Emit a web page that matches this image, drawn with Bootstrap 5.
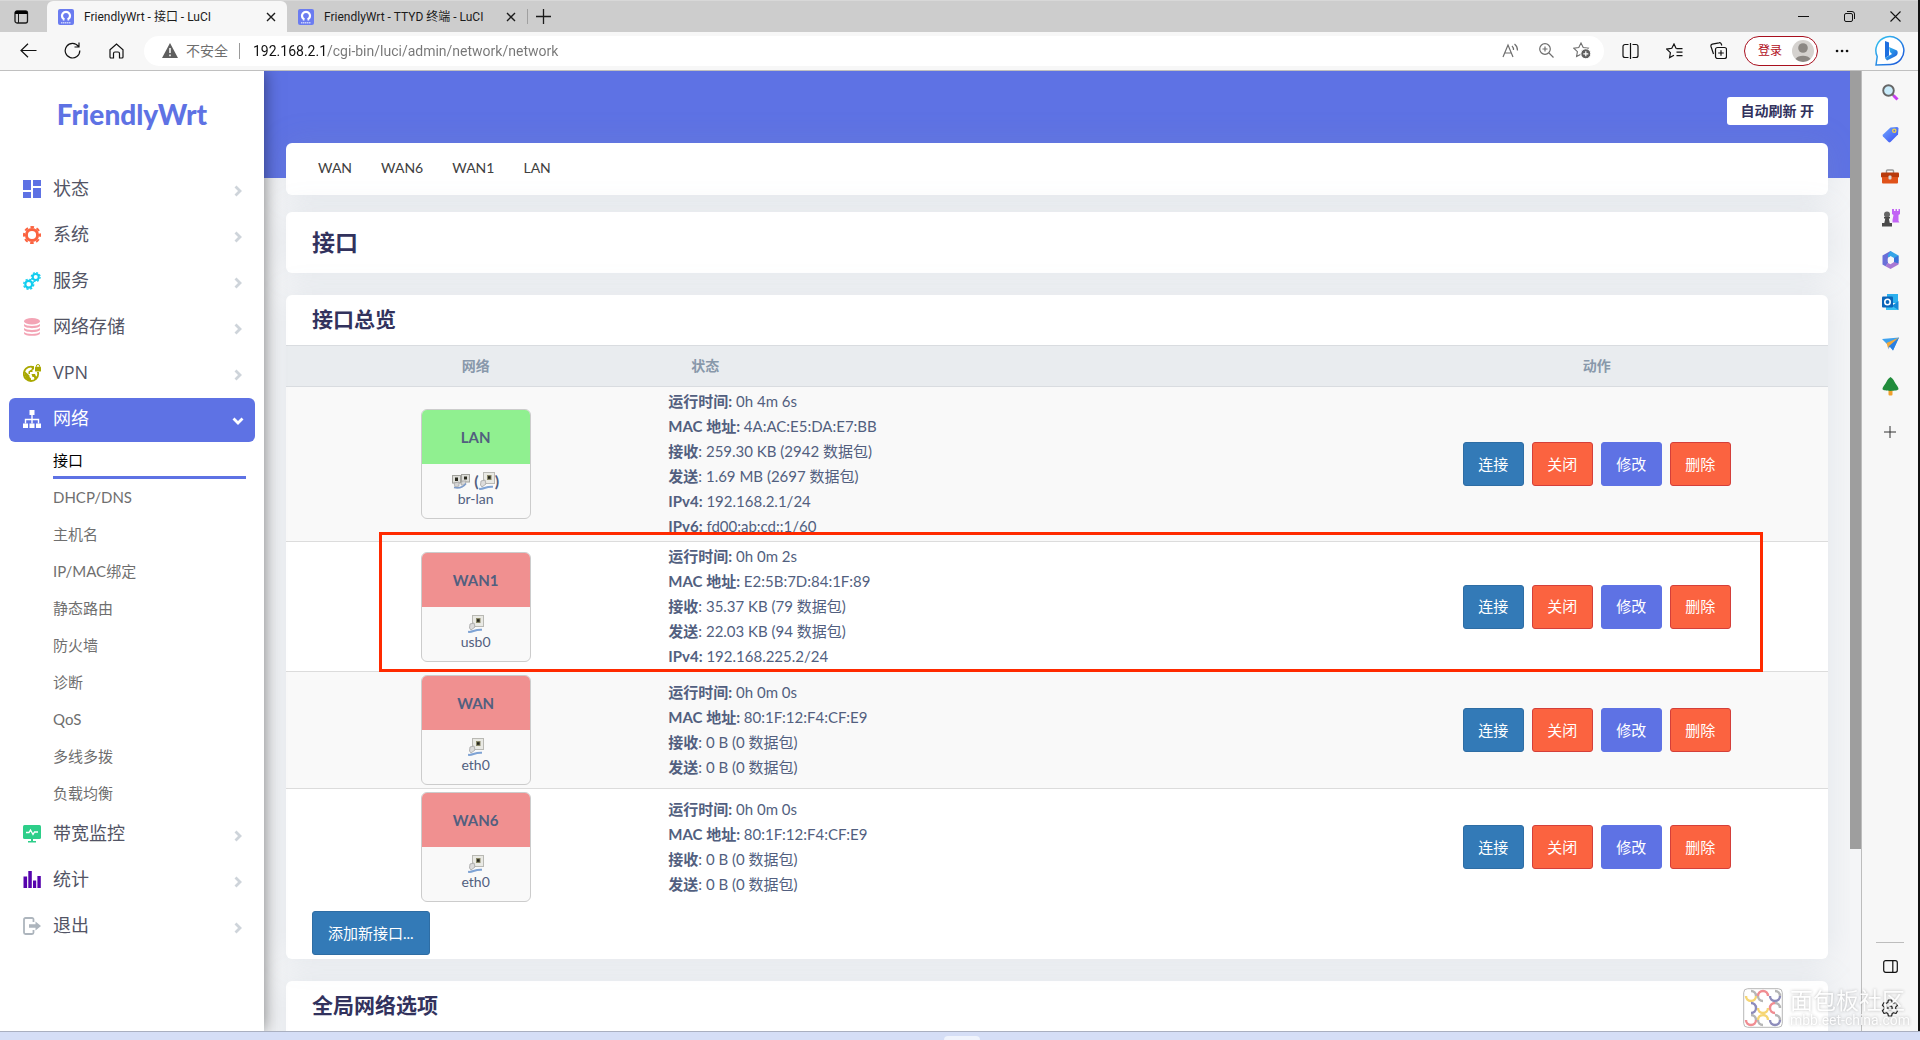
<!DOCTYPE html>
<html lang="zh-CN">
<head>
<meta charset="utf-8">
<meta name="viewport" content="width=device-width, initial-scale=1">
<title>FriendlyWrt - 接口 - LuCI</title>
<link rel="stylesheet" href="https://cdn.jsdelivr.net/npm/bootstrap@5.3.0/dist/css/bootstrap.min.css">
<style>
:root { --brand: #5e72e4; --ui: Roboto, "Noto Sans CJK SC", sans-serif; --page: Lato, "Noto Sans CJK SC", sans-serif; }
body { font-family: var(--page); font-size: 15px; line-height: 25px; color: #525f7f; background: #f7f7f7; }
svg { display: block; flex: none; }
a { color: inherit; text-decoration: none; }

/* browser chrome */
.chrome { font-family: var(--ui); font-size: 13px; line-height: 20px; color: #1b1b1b; border-right: 2px solid #111; }
.tabstrip { height: 32px; background: #cdcdcd; border-top: 1px solid #d8d8d8; }
.tool { border: 0; background: none; padding: 0; color: #1b1b1b; display: flex; align-items: center; justify-content: center; }
.w-tool { width: 44px; }
.w-side { width: 56px; }
.w-win { width: 46px; }
.w-actions { width: 47px; }
.browser-tab { width: 240px; padding: 0 7px 0 11px; gap: 10px; font-size: 12px; }
.browser-tab.current { background: #f7f7f7; border-radius: 6px 6px 0 0; }
.addressbar { height: 39px; border-bottom: 1px solid #c0c0c0; background: #f7f7f7; padding-bottom: 1px; }
.nav-tools { width: 144px; padding-left: 6px; }
.pill { height: 30px; border-radius: 15px; background: #fff; padding: 0 4px 0 18px; color: #6e6e6e; font-size: 14px; }
.pill .tool { color: #6e6e6e; width: 36px; }
.pill-rule { width: 1px; height: 16px; background: #9a9a9a; margin: 0 13px 0 11px; }
.url-box { border: 0; outline: 0; padding: 0; color: transparent; background: linear-gradient(90deg, #111 73px, #767676 73px); -webkit-background-clip: text; background-clip: text; }
.login { width: 74px; height: 30px; border: 1px solid #a80f1e; border-radius: 15px; background: #fff; color: #b10e1c; padding: 0 3px 0 13px; font-size: 12px; }
.edge-rail { width: 58px; background: #f7f7f7; border-right: 2px solid #111; padding-bottom: 2px; }
.edge-rail .tool { width: 56px; height: 42px; }
.rail-rule { width: 28px; height: 1px; background: #bdbdbd; margin: 0 14px 2px; }
.taskbar { height: 9px; background: #d5def6; border-top: 1px solid #a9afc0; }
.taskbar span { width: 36px; height: 4px; margin-left: 944px; background: #eff3fc; border-radius: 4px 4px 0 0; }

/* router page */
.menu-side { width: 264px; background: #fff; box-shadow: 0 0 16px rgba(0,0,0,.5); z-index: 2; padding: 0 9px; }
.logo-text { font-size: 28px; line-height: 34px; font-weight: 900; color: var(--brand); padding: 26px 0 37px; }
.menu-link { height: 44px; margin-bottom: 2px; padding: 0 13px 3px 14px; border-radius: 6px; font-family: "Open Sans", "Noto Sans CJK SC", sans-serif; font-size: 18px; color: #525465; gap: 12px; }
.menu-link .arrow { margin: 4px 0 0 auto; color: #ced4da; }
.menu-link.active { background: var(--brand); color: #fff; margin-bottom: 0; }
.menu-link.active .arrow { color: #fff; margin-right: -2px; }
.menu-sub { padding-bottom: 1px; }
.sub-link { display: block; height: 37px; line-height: 36px; margin: 0 9px 0 44px; color: #6f6f6f; }
.sub-link.active { color: #000; border-bottom: 3px solid var(--brand); }
.content-side { background: linear-gradient(#5e72e4 107px, #f4f5f7 107px); padding: 26px 22px 0; }
.scroll-track { width: 12px; background: #f4f5f7; border-right: 1px solid #bdbdbd; }
.scroll-track div { height: 81%; background: #9e9e9e; }
.refresh { height: 28px; border: 0; border-radius: 3px; background: #fff; color: #32325d; font-size: 14px; line-height: 28px; font-weight: 700; padding: 0 14px; }
.panel { background: #fff; border-radius: 6px; box-shadow: 0 0 32px rgba(136,152,170,.17); margin-bottom: 22px; }
.panel-tabs { height: 52px; margin: 18px 0 17px; padding: 0 32px 3px; gap: 29px; font-size: 14px; color: #404040; }
.panel h2, .panel h3 { margin: 0; padding: 0 26px; font-weight: 700; color: #32325d; }
.panel h2 { font-size: 23px; line-height: 61px; }
.panel h3 { font-size: 21px; line-height: 47px; padding-bottom: 3px; }
.iface { border-collapse: separate; border-spacing: 0; table-layout: fixed; width: 100%; }
.iface td { border-bottom: 1px solid #dcdcdc; padding: 2px 3px; vertical-align: middle; }
.iface td.net { padding: 3px; }
.iface tr:last-child td { border-bottom: 0; }
.iface tbody tr:nth-child(odd) { background: #f9f9f9; }
.iface th { height: 42px; background: #e9ecef; border: 0 solid #d9dce0; border-width: 1px 0; font-size: 14px; line-height: 20px; color: #8898aa; padding: 0 26px; }
.net-box { width: 110px; height: 110px; border: 1px solid #ccc; border-radius: 6px; background: #f9f9f9; overflow: hidden; font-size: 14px; line-height: 18px; }
.net-name { height: 54px; line-height: 54px; font-size: 15px; font-weight: 700; background: #f09090; }
.net-name.up { background: #90f090; }
.net-ico { height: 18px; margin-top: 8px; font-size: 16px; }
.act { height: 44px; padding: 0 15px; border: 1px solid; border-radius: 3px; color: #fff; font-size: 15px; white-space: nowrap; }
td .act { width: 61px; padding: 0; }
.act-blue { background: #337ab7; border-color: #2e6da4; }
.act-red { background: #fb6340; border-color: #d43f3a; }
.act-brand { background: #5e72e4; border-color: #5e72e4; }
.add-row { padding: 6px 26px 4px; }
.highlight-frame { position: absolute; left: 93px; right: 65px; top: 237px; height: 140px; border: 3px solid #ff2a00; pointer-events: none; }
.watermark { position: absolute; right: 10px; bottom: 3px; color: #fff; text-shadow: 0 0 3px rgba(90,90,90,.5); opacity: .85; gap: 7px; }
.watermark .wm-big { font-size: 23px; line-height: 26px; }
.watermark .wm-small { font-size: 14px; line-height: 15px; font-family: Roboto, sans-serif; }
</style>
<script src="https://cdn.jsdelivr.net/npm/bootstrap@5.3.0/dist/js/bootstrap.bundle.min.js"></script>
</head>
<body class="d-flex flex-column vh-100 overflow-hidden">

<svg width="0" height="0" class="position-absolute">
  <defs>
    <linearGradient id="gBlue" x1="0" y1="0" x2="1" y2="1"><stop offset="0" stop-color="#6fa8ff"/><stop offset="1" stop-color="#3a4df0"/></linearGradient>
    <linearGradient id="gBing" x1="0" y1="0" x2="1" y2="1"><stop offset="0" stop-color="#35c8f2"/><stop offset="1" stop-color="#1b50d8"/></linearGradient>
  </defs>
  <symbol id="fav" viewBox="0 0 16 16"><rect width="16" height="16" rx="2" fill="#6b7cf0"/><path d="M6.500 10.500H4.800M9.500 10.500h1.700M6.500 10.500A4 4 0 1 1 9.500 10.500" fill="none" stroke="#fff" stroke-width="2.200"/><path d="M3 13.800h10" stroke="#c9d0fb" stroke-width="1.400" stroke-dasharray="1.500 .5"/></symbol>
  <symbol id="x" viewBox="0 0 10 10"><path d="M1 1l8 8M9 1l-8 8" stroke="#1b1b1b" stroke-width="1.400"/></symbol>
  <symbol id="chev" viewBox="0 0 8 12"><path d="M1.500 1.500L6 6l-4.500 4.500" fill="none" stroke="currentColor" stroke-width="2.800"/></symbol>
  <symbol id="nic" viewBox="0 0 16 18"><rect x="4.500" y=".5" width="11" height="11" fill="#e9e9e4" stroke="#b9b9b4"/><rect x="8" y="3" width="4.500" height="5" fill="#8b8a6a"/><rect x="9" y="4.200" width="2.600" height="2.600" fill="#25251c"/><path d="M2 9l4-1 1 4-4 3-1.500-2z" fill="#dcdcdc" stroke="#a5a5a5" stroke-width=".8"/><path d="M0 16.800c5 .8 6-2.500 14-2" fill="none" stroke="#7fa3d4" stroke-width="2"/></symbol>
  <symbol id="bridge" viewBox="0 0 18 16"><rect x="9.500" y="1.500" width="8" height="7.500" fill="#deded9" stroke="#a2a29d"/><rect x="12" y="3.500" width="3" height="3" fill="#2a2a20"/><rect x=".5" y="2.500" width="8" height="7.500" fill="#deded9" stroke="#a2a29d"/><rect x="3" y="4.500" width="3" height="3.500" fill="#2a2a20"/><path d="M2 10l5-1v4l-4 1zM10 8l4 0-1 4-4 0z" fill="#d5d5d5" stroke="#a0a0a0" stroke-width=".7"/><path d="M2 14.500c5 1 9 0 12-4" fill="none" stroke="#7f9dca" stroke-width="1.600"/></symbol>
</svg>

<header class="chrome">
  <div class="tabstrip d-flex align-items-stretch">
    <button class="tool w-actions pe-2" aria-label="标签操作"><svg class="ms-1" width="15" height="14" viewBox="0 0 15 14"><rect x="1" y="1" width="12.500" height="12" rx="2" fill="none" stroke="#1b1b1b" stroke-width="1.300"/><path d="M1 2.500a1.500 1.500 0 0 1 1.500-1.500h9.500a1.500 1.500 0 0 1 1.500 1.500V4H1z"/><path d="M4.500 4v9" stroke="#1b1b1b"/></svg></button>
    <div class="browser-tab current d-flex align-items-center"><svg width="16" height="16"><use href="#fav"/></svg><span class="me-auto">FriendlyWrt - 接口 - LuCI</span><button class="tool p-1" aria-label="关闭标签"><svg width="10" height="10"><use href="#x"/></svg></button></div>
    <div class="browser-tab d-flex align-items-center"><svg width="16" height="16"><use href="#fav"/></svg><span class="me-auto">FriendlyWrt - TTYD 终端 - LuCI</span><button class="tool p-1" aria-label="关闭标签"><svg width="10" height="10"><use href="#x"/></svg></button></div>
    <div class="vr my-2"></div>
    <button class="tool px-2" aria-label="新建标签"><svg width="15" height="15" viewBox="0 0 15 15"><path d="M7.500 0v15M0 7.500h15" stroke="#1b1b1b" stroke-width="1.300"/></svg></button>
    <button class="tool w-win ms-auto" aria-label="最小化"><svg width="11" height="11"><path d="M0 5.500h11" stroke="#111"/></svg></button>
    <button class="tool w-win" aria-label="还原"><svg width="11" height="11" viewBox="0 0 11 11"><rect x=".5" y="2.500" width="8" height="8" rx="1.500" fill="none" stroke="#111"/><path d="M3 .5h5a2.500 2.500 0 0 1 2.500 2.500v5" fill="none" stroke="#111"/></svg></button>
    <button class="tool w-win" aria-label="关闭窗口"><svg width="11" height="11"><path d="M.5 .5l10 10M10.500 .5l-10 10" stroke="#111" stroke-width="1.100"/></svg></button>
  </div>
  <div class="addressbar d-flex align-items-center">
    <div class="nav-tools d-flex">
      <button class="tool w-tool" aria-label="后退"><svg width="17" height="15" viewBox="0 0 17 15"><path d="M16.500 7.500H1M8 .7L1 7.500l7 6.800" fill="none" stroke="#111" stroke-width="1.200"/></svg></button>
      <button class="tool w-tool" aria-label="刷新"><svg width="17" height="17" viewBox="0 0 17 17"><path d="M14.500 4.500A7.300 7.300 0 1 0 15.800 8.500M15 .5v4.500h-4.500" fill="none" stroke="#111" stroke-width="1.200"/></svg></button>
      <button class="tool w-tool" aria-label="主页"><svg width="15" height="16" viewBox="0 0 15 16"><path d="M1 6.800L7.500 1 14 6.800V14a1 1 0 0 1-1 1h-2.500v-4.500a1.500 1.500 0 0 0-1.500-1.500H6a1.500 1.500 0 0 0-1.500 1.500V15H2a1 1 0 0 1-1-1z" fill="none" stroke="#111" stroke-width="1.200"/></svg></button>
    </div>
    <div class="pill d-flex align-items-center flex-grow-1">
      <svg width="16" height="15" viewBox="0 0 16 15"><path d="M8 0l8 15H0z" fill="#5f5f5f"/><path d="M8 5v5M8 11.500v1.700" stroke="#fff" stroke-width="1.500"/></svg>
      <label for="url" class="ms-2">不安全</label><span class="pill-rule"></span>
      <input id="url" class="url-box flex-grow-1" value="192.168.2.1/cgi-bin/luci/admin/network/network">
      <button class="tool" aria-label="大声朗读"><svg width="17" height="15" viewBox="0 0 17 15"><path d="M1 14L6 2l5 12M2.800 10h6.400M10 3a5 5 0 0 1 1.500 4M12.500 1a8 8 0 0 1 3 6.500" fill="none" stroke="#6e6e6e" stroke-width="1.200"/></svg></button>
      <button class="tool" aria-label="缩放"><svg width="15" height="15" viewBox="0 0 15 15"><path d="M10 10l4.500 4.500M6 3.500v5M3.500 6h5" stroke="#6e6e6e" stroke-width="1.200"/><circle cx="6" cy="6" r="5.300" fill="none" stroke="#6e6e6e" stroke-width="1.200"/></svg></button>
      <button class="tool" aria-label="收藏此页"><svg width="18" height="17" viewBox="0 0 18 17"><path d="M8 1l2.200 4.600 5 .6-3.600 3.500.8 4.800L8 12.200l-4.400 2.300.8-4.900L.8 6.200l5-.6z" fill="none" stroke="#6e6e6e" stroke-width="1.100"/><circle cx="12.800" cy="11.800" r="5" fill="#5f5f5f" stroke="#fff" stroke-width="1"/><path d="M12.800 9.300v5M10.300 11.800h5" stroke="#fff" stroke-width="1.200"/></svg></button>
    </div>
    <button class="tool w-tool ms-1" aria-label="分屏"><svg width="17" height="16" viewBox="0 0 17 16"><path d="M6.500 1.500H3a2 2 0 0 0-2 2v9a2 2 0 0 0 2 2h3.500M10.500 1.500H14a2 2 0 0 1 2 2v9a2 2 0 0 1-2 2h-3.500M8.500 0v16" fill="none" stroke="#111" stroke-width="1.200"/></svg></button>
    <button class="tool w-tool" aria-label="收藏夹"><svg width="17" height="16" viewBox="0 0 17 16"><path d="M11.500 5.500L10 5.300 8 1 5.800 5.300l-5 .8 3.600 3.500-.8 5L8 12.300M10.500 5.700h6M10.500 9.200h6M10.500 12.700h6" fill="none" stroke="#111" stroke-width="1.200"/></svg></button>
    <button class="tool w-tool" aria-label="集锦"><svg width="17" height="17" viewBox="0 0 17 17"><rect x="5.500" y="5.500" width="11" height="11" rx="2" fill="none" stroke="#111" stroke-width="1.200"/><path d="M11 8.200v5.600M8.200 11h5.600M3.500 12L1 4.500a2 2 0 0 1 1.300-2.400L9 .8a2 2 0 0 1 2.300 1.200l.5 1.500" fill="none" stroke="#111" stroke-width="1.200"/></svg></button>
    <button class="login d-flex align-items-center justify-content-between ms-1">登录<svg width="22" height="22" viewBox="0 0 22 22"><circle cx="11" cy="11" r="11" fill="#d5d2cf"/><circle cx="11" cy="8" r="4.800" fill="#8c8884"/><path d="M3.500 19a8.500 6 0 0 1 15 0a11 11 0 0 1-15 0z" fill="#8c8884"/></svg></button>
    <button class="tool w-tool ps-1" aria-label="更多"><svg width="14" height="4"><path d="M2 2h.1M7 2h.1M12 2h.1" stroke="#111" stroke-width="2.600" stroke-linecap="round"/></svg></button>
    <button class="tool w-side" aria-label="Bing"><svg width="31" height="31" viewBox="0 0 31 31"><path d="M1 30l1.200-8.500A14 14 0 1 1 15.500 29.500z" fill="#fff" stroke="url(#gBing)" stroke-width="1.500"/><path d="M10 6l4 1.500v13l-4 2.500z" fill="#1d6fe0"/><path d="M14 12l8 3.500c1.500 2 .5 5-2 6L12 25.500 10 23l7-4-2-2z" fill="url(#gBing)"/></svg></button>
  </div>
</header>

<div class="d-flex flex-grow-1 overflow-hidden position-relative">
  <nav class="menu-side flex-shrink-0">
    <a href="#" class="logo-text d-block text-center">FriendlyWrt</a>
    <a href="#" class="menu-link d-flex align-items-center"><svg width="18" height="18"><path d="M0 0h8v10H0zM10 0h8v6h-8zM0 12h8v6H0zM10 8h8v10h-8z" fill="#5e72e4"/></svg>状态<svg class="arrow" width="8" height="12"><use href="#chev"/></svg></a>
    <a href="#" class="menu-link d-flex align-items-center"><svg width="18" height="18" viewBox="0 0 18 18" fill="none" stroke="#fb6340"><circle cx="9" cy="9" r="5.600" stroke-width="3"/><circle cx="9" cy="9" r="8" stroke-width="2" stroke-dasharray="3.640 2.643" stroke-dashoffset="1.820"/></svg>系统<svg class="arrow" width="8" height="12"><use href="#chev"/></svg></a>
    <a href="#" class="menu-link d-flex align-items-center"><svg width="18" height="18" viewBox="0 0 18 18" fill="none" stroke="#11cdef"><circle cx="5.700" cy="12.300" r="3.400" stroke-width="2.200"/><circle cx="5.700" cy="12.300" r="5" stroke-width="1.400" stroke-dasharray="2.200 1.727"/><circle cx="12.700" cy="5" r="3" stroke-width="2"/><circle cx="12.700" cy="5" r="4.400" stroke-width="1.300" stroke-dasharray="1.900 1.556"/></svg>服务<svg class="arrow" width="8" height="12"><use href="#chev"/></svg></a>
    <a href="#" class="menu-link d-flex align-items-center"><svg width="18" height="18" viewBox="0 0 18 18"><ellipse cx="9" cy="3.200" rx="8" ry="3.200" fill="#f3a4b5"/><path d="M1 6c2 2.600 14 2.600 16 0v1.500c0 3.500-16 3.500-16 0zM1 10c2 2.600 14 2.600 16 0v1.500c0 3.500-16 3.500-16 0zM1 14c2 2.600 14 2.600 16 0v1.200c0 3.500-16 3.500-16 0z" fill="#f3a4b5"/></svg>网络存储<svg class="arrow" width="8" height="12"><use href="#chev"/></svg></a>
    <a href="#" class="menu-link d-flex align-items-center"><svg width="18" height="18" viewBox="0 0 18 18"><circle cx="8" cy="9.800" r="7.200" fill="none" stroke="#a9a800" stroke-width="1.800"/><path d="M1.500 7l5 4.500v1.500l1.500 1.500v2.500c-4 0-7-4-6.500-10zM8 2.500h3.500v2.500l-2 1v2H7v2h5l1 2.500h2c-1 2.500-2.500 3.500-3.500 3l-.5-2.500H9.500l-1-3H5.500V7.500L9 5z" fill="#a9a800"/><path d="M11 0h7v8h-7z" fill="#fff"/><rect x="12" y="2.800" width="6" height="4.800" rx=".7" fill="#a9a800"/><path d="M13.300 3V2.200a1.700 1.700 0 0 1 3.400 0v.8" fill="none" stroke="#a9a800"/></svg>VPN<svg class="arrow" width="8" height="12"><use href="#chev"/></svg></a>
    <a href="#" class="menu-link active d-flex align-items-center"><svg width="18" height="18" viewBox="0 0 18 18"><path d="M6.500 0h5v5h-5zM0 13.500h5V18H0zM6.500 13.500h5V18h-5zM13 13.500h5V18h-5z" fill="#fff"/><path d="M9 5v8.500M2.500 13.500V9.500h13v4" fill="none" stroke="#fff" stroke-width="1.400"/></svg>网络<svg class="arrow" width="12" height="8" viewBox="0 0 12 8"><path d="M1.500 1.500L6 6l4.500-4.500" fill="none" stroke="currentColor" stroke-width="2.800"/></svg></a>
    <div class="menu-sub">
      <a href="#" class="sub-link active">接口</a>
      <a href="#" class="sub-link">DHCP/DNS</a>
      <a href="#" class="sub-link">主机名</a>
      <a href="#" class="sub-link">IP/MAC绑定</a>
      <a href="#" class="sub-link">静态路由</a>
      <a href="#" class="sub-link">防火墙</a>
      <a href="#" class="sub-link">诊断</a>
      <a href="#" class="sub-link">QoS</a>
      <a href="#" class="sub-link">多线多拨</a>
      <a href="#" class="sub-link">负载均衡</a>
    </div>
    <a href="#" class="menu-link d-flex align-items-center"><svg width="18" height="18" viewBox="0 0 18 18"><rect y="0" width="18" height="14" rx="1.500" fill="#2dce89"/><path d="M8 14h2v2h3v1.500H5V16h3z" fill="#2dce89"/><path d="M3 7.500h3l1.500-2.500 2.500 4.500L11.500 7H15" fill="none" stroke="#fff" stroke-width="1.300"/></svg>带宽监控<svg class="arrow" width="8" height="12"><use href="#chev"/></svg></a>
    <a href="#" class="menu-link d-flex align-items-center"><svg width="18" height="18" viewBox="0 0 18 18"><path d="M.5 5.500h3.600V17H.5zM5.300 0h3.500v17H5.300zM10 9.500h3.200V17H10zM14.400 5h3.400v12h-3.400z" fill="#5603ad"/></svg>统计<svg class="arrow" width="8" height="12"><use href="#chev"/></svg></a>
    <a href="#" class="menu-link d-flex align-items-center"><svg width="18" height="18" viewBox="0 0 18 18"><path d="M10.500 5V2.500a1.500 1.500 0 0 0-1.500-1.500H2.500A1.500 1.500 0 0 0 1 2.500v13A1.500 1.500 0 0 0 2.500 17H9a1.500 1.500 0 0 0 1.500-1.500V13" fill="none" stroke="#adb5bd" stroke-width="1.800"/><path d="M6 7.300h6.500V4.500L18 9l-5.500 4.500v-2.800H6z" fill="#adb5bd"/></svg>退出<svg class="arrow" width="8" height="12"><use href="#chev"/></svg></a>
  </nav>

  <main class="content-side flex-grow-1 overflow-hidden">
    <div class="d-flex justify-content-end"><button class="refresh">自动刷新 开</button></div>
    <div class="panel panel-tabs d-flex align-items-center"><a href="#">WAN</a><a href="#">WAN6</a><a href="#">WAN1</a><a href="#">LAN</a></div>
    <div class="panel"><h2>接口</h2></div>
    <section class="panel position-relative">
      <h3>接口总览</h3>
      <table class="iface">
        <colgroup><col style="width:24.6%"><col style="width:45.4%"><col style="width:30%"></colgroup>
        <thead><tr><th class="text-center">网络</th><th>状态</th><th class="text-center">动作</th></tr></thead>
        <tbody>
          <tr>
            <td class="net"><div class="net-box mx-auto text-center"><div class="net-name up">LAN</div><div class="net-ico d-flex justify-content-center align-items-center"><svg width="18" height="16"><use href="#bridge"/></svg><b class="ms-1">(</b><svg width="16" height="18"><use href="#nic"/></svg><b>)</b></div>br-lan</div></td>
            <td><b>运行时间:</b> 0h 4m 6s<br><b>MAC 地址:</b> 4A:AC:E5:DA:E7:BB<br><b>接收</b>: 259.30 KB (2942 数据包)<br><b>发送</b>: 1.69 MB (2697 数据包)<br><b>IPv4:</b> 192.168.2.1/24<br><b>IPv6:</b> fd00:ab:cd::1/60</td>
            <td><div class="d-flex justify-content-center gap-2"><button class="act act-blue">连接</button><button class="act act-red">关闭</button><button class="act act-brand">修改</button><button class="act act-red">删除</button></div></td>
          </tr>
          <tr>
            <td class="net"><div class="net-box mx-auto text-center"><div class="net-name">WAN1</div><div class="net-ico d-flex justify-content-center"><svg width="16" height="18"><use href="#nic"/></svg></div>usb0</div></td>
            <td><b>运行时间:</b> 0h 0m 2s<br><b>MAC 地址:</b> E2:5B:7D:84:1F:89<br><b>接收</b>: 35.37 KB (79 数据包)<br><b>发送</b>: 22.03 KB (94 数据包)<br><b>IPv4:</b> 192.168.225.2/24</td>
            <td><div class="d-flex justify-content-center gap-2"><button class="act act-blue">连接</button><button class="act act-red">关闭</button><button class="act act-brand">修改</button><button class="act act-red">删除</button></div></td>
          </tr>
          <tr>
            <td class="net"><div class="net-box mx-auto text-center"><div class="net-name">WAN</div><div class="net-ico d-flex justify-content-center"><svg width="16" height="18"><use href="#nic"/></svg></div>eth0</div></td>
            <td><b>运行时间:</b> 0h 0m 0s<br><b>MAC 地址:</b> 80:1F:12:F4:CF:E9<br><b>接收</b>: 0 B (0 数据包)<br><b>发送</b>: 0 B (0 数据包)</td>
            <td><div class="d-flex justify-content-center gap-2"><button class="act act-blue">连接</button><button class="act act-red">关闭</button><button class="act act-brand">修改</button><button class="act act-red">删除</button></div></td>
          </tr>
          <tr>
            <td class="net"><div class="net-box mx-auto text-center"><div class="net-name">WAN6</div><div class="net-ico d-flex justify-content-center"><svg width="16" height="18"><use href="#nic"/></svg></div>eth0</div></td>
            <td><b>运行时间:</b> 0h 0m 0s<br><b>MAC 地址:</b> 80:1F:12:F4:CF:E9<br><b>接收</b>: 0 B (0 数据包)<br><b>发送</b>: 0 B (0 数据包)</td>
            <td><div class="d-flex justify-content-center gap-2"><button class="act act-blue">连接</button><button class="act act-red">关闭</button><button class="act act-brand">修改</button><button class="act act-red">删除</button></div></td>
          </tr>
        </tbody>
      </table>
      <div class="add-row"><button class="act act-blue">添加新接口...</button></div>
      <div class="highlight-frame"></div>
    </section>
    <section class="panel pb-5"><h3>全局网络选项</h3></section>
  </main>
  <div class="scroll-track flex-shrink-0"><div></div></div>

  <aside class="edge-rail d-flex flex-column flex-shrink-0">
    <button class="tool" aria-label="搜索"><svg width="17" height="17" viewBox="0 0 17 17"><path d="M10.500 10.500l1.500 1.500" stroke="#777" stroke-width="2"/><path d="M11.500 11.500l4 4" stroke="#c63df2" stroke-width="3"/><circle cx="6.500" cy="6.500" r="5.300" fill="#c9ecfb" stroke="#666" stroke-width="1.900"/></svg></button>
    <button class="tool" aria-label="购物"><svg width="17" height="17" viewBox="0 0 17 17"><path d="M8.500 1.500L15 1a1.500 1.500 0 0 1 1.500 1.500L16 8.500 8.500 16a1.500 1.500 0 0 1-2 0L1 10.500a1.500 1.500 0 0 1 0-2z" fill="url(#gBlue)"/><circle cx="12.300" cy="4.700" r="1.600" fill="#5b6cf0" stroke="#f5d442" stroke-width="1.300"/></svg></button>
    <button class="tool" aria-label="工具"><svg width="18" height="15" viewBox="0 0 18 15"><path d="M5.500 4V2a1 1 0 0 1 1-1h5a1 1 0 0 1 1 1v2" fill="none" stroke="#999" stroke-width="1.400"/><rect y="3.500" width="18" height="5" rx="1" fill="#b83a0c"/><path d="M1 8h16v5.500a1 1 0 0 1-1 1H2a1 1 0 0 1-1-1z" fill="#e0521a"/><rect x="7.500" y="6.500" width="3" height="4" rx="1" fill="#d8d8d8"/></svg></button>
    <button class="tool" aria-label="游戏"><svg width="19" height="18" viewBox="0 0 19 18"><path d="M11 0h2v2h1.500V0h1.500v2h1.500V0h1.500v5l-1.500 1v6l1 1.500h-7V11l1-5-1.500-1z" fill="#c264f5"/><circle cx="6" cy="5.500" r="3" fill="#666"/><path d="M3 8h6v1.500H7.800l1 4.500H11v3.500H1V14h2.300l1-4.500H3z" fill="#4a4a4a"/></svg></button>
    <button class="tool" aria-label="Microsoft 365"><svg width="17" height="18" viewBox="0 0 17 18"><path d="M8.500 0L.5 4.500v9l3 1.800 2.500-3V6.500L12 3z" fill="#6a6fd8"/><path d="M8.500 0l8 4.500V10L12 7 8.500 5 6 6.500V4z" fill="#35a5e8"/><path d="M16.500 8.500v5l-8 4.500-5-2.800L6 12l2.500 1.200L12 11z" fill="#a878d4"/><path d="M16.500 4.500v8L12 11V7z" fill="#3b70d8"/><path d="M8.500 5.700L11.500 7.400v3.400L8.500 12.500 5.700 10.800V7.400z" fill="#f7f7f7"/></svg></button>
    <button class="tool" aria-label="Outlook"><svg width="17" height="16" viewBox="0 0 17 16"><rect x="5" y="0" width="11" height="9" fill="#2cb0ef"/><path d="M16.500 7v9H4z" fill="#1489d8"/><path d="M4 16V8l12.500 8z" fill="#39c0f2"/><rect y="2.500" width="11" height="11" rx="1" fill="#0a64b8"/><circle cx="5.500" cy="8" r="2.700" fill="none" stroke="#fff" stroke-width="1.600"/></svg></button>
    <button class="tool" aria-label="Drop"><svg width="17" height="14" viewBox="0 0 17 14"><path d="M0 2l17-1.500-6 13-3.500-4z" fill="#3ea2ef"/><path d="M17 .5L4.500 6 6 11z" fill="#f2a93b"/><path d="M17 .5L7 9l-1 3.500 2-3 3 4z" fill="#2b7fe0"/></svg></button>
    <button class="tool" aria-label="圣诞树"><svg width="17" height="19" viewBox="0 0 17 19"><path d="M6.500 13h4v4.500a1 1 0 0 1-1 1h-2a1 1 0 0 1-1-1z" fill="#f0a02c"/><path d="M8.500 0c3 2 3.500 4 5 6.500 1.500 2 3 4 3 5.500 0 2.500-16 2.500-16 0 0-1.500 1.500-3.500 3-5.500C5 4 5.500 2 8.500 0z" fill="#218c3c"/></svg></button>
    <button class="tool mt-1" aria-label="自定义"><svg width="12" height="12"><path d="M6 0v12M0 6h12" stroke="#333"/></svg></button>
    <div class="rail-rule mt-auto"></div>
    <button class="tool" aria-label="边栏"><svg width="15" height="13" viewBox="0 0 15 13"><rect x=".7" y=".7" width="13.600" height="11.600" rx="2" fill="none" stroke="#111" stroke-width="1.200"/><path d="M9.800 1v11" stroke="#111" stroke-width="1.200"/></svg></button>
    <button class="tool" aria-label="设置"><svg width="18" height="18" viewBox="0 0 18 18" fill="none" stroke="#222" stroke-width="1.200"><path d="M7.400 1h3.200l.6 2.500 1.300.8L15 3.500l1.600 2.800-1.900 1.800v1.800l1.900 1.800L15 14.500l-2.500-.8-1.300.8-.6 2.500H7.400l-.6-2.500-1.300-.8-2.500.8-1.600-2.800 1.900-1.800V8.100L1.400 6.300 3 3.500l2.500.8 1.300-.8z" stroke-linejoin="round"/><circle cx="9" cy="9" r="2.200"/></svg></button>
  </aside>

  <div class="watermark d-flex align-items-center pe-none">
    <svg width="40" height="40" viewBox="0 0 40 40" fill="none" stroke-width="2.400"><rect x=".7" y=".7" width="38.600" height="38.600" rx="4" fill="#fff" stroke="#aaa" stroke-width="1"/><path d="M3 8a5 5 0 0 0 10 0M15 32a5 5 0 0 1 10 0M15 20a5 5 0 0 0 10 0" stroke="#f5cf5c"/><path d="M15 8a5 5 0 0 1 10 0M32 25a5 5 0 0 1 0-10M3 32a5 5 0 0 0 10 0" stroke="#ef7a80"/><path d="M27 8a5 5 0 0 0 10 0M8 15a5 5 0 0 1 0 10M27 32a5 5 0 0 0 10 0" stroke="#7a78b0"/><path d="M8 3a5 5 0 0 1 5 5M15 8a5 5 0 0 0 5 5M32 3a5 5 0 0 1 5 5M32 15a5 5 0 0 1 5 5M8 27a5 5 0 0 1 5 5M20 37a5 5 0 0 1-5-5M32 27a5 5 0 0 1 5 5" stroke="#aaa"/></svg>
    <div><div class="wm-big">面包板社区</div><div class="wm-small">mbb.eet-china.com</div></div>
  </div>
</div>
<footer class="taskbar d-flex align-items-end flex-shrink-0"><span></span></footer>
</body>
</html>
